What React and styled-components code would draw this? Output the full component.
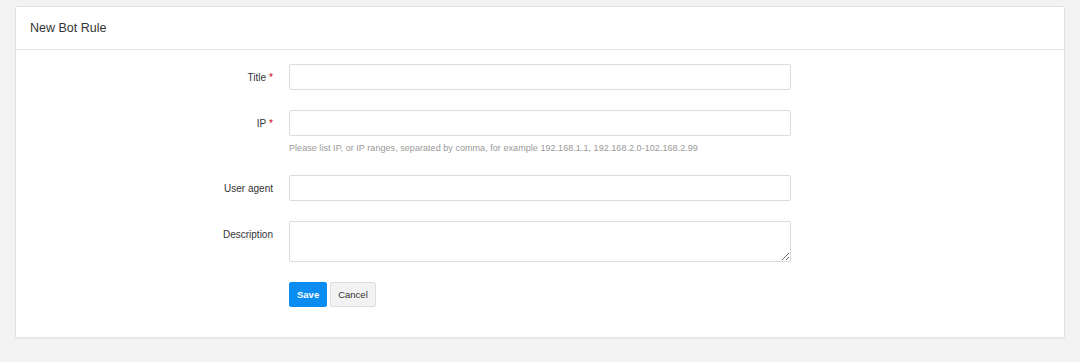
import { createGlobalStyle, styled } from "styled-components";

const GlobalStyle = createGlobalStyle`
  html, body {
    margin: 0;
    padding: 0;
    background-color: #f3f3f3;
    font-family: "Liberation Sans", Arial, sans-serif;
    color: #333;
  }
`;

const Page = styled.div`
  padding: 6px 15px 0 15px;
  height: 362px;
  box-sizing: border-box;
`;

const Card = styled.div`
  background-color: #ffffff;
  border: 1px solid #e2e2e2;
  border-radius: 2px;
  box-shadow: 0 1px 1px rgba(0, 0, 0, 0.04);
`;

const CardHeader = styled.div`
  height: 42px;
  display: flex;
  align-items: center;
  padding: 0 14px;
  border-bottom: 1px solid #e6e6e6;

  h2 {
    margin: 0;
    font-size: 12.5px;
    font-weight: 400;
    color: #333;
  }
`;

const CardBody = styled.form`
  padding: 14px 0 30px;
  display: flex;
  flex-direction: column;
  gap: 20px;
`;

const Row = styled.div`
  display: grid;
  grid-template-columns: 257px 502px;
  column-gap: 16px;
  align-items: start;
`;

const Label = styled.label`
  text-align: right;
  font-size: 10px;
  height: 26px;
  line-height: 28px;
  color: #333;

  span {
    color: #d0021b;
    margin-left: 3px;
  }
`;

const Field = styled.div`
  display: flex;
  flex-direction: column;
`;

const Input = styled.input`
  height: 26px;
  box-sizing: border-box;
  border: 1px solid #dcdcdc;
  border-radius: 2px;
  padding: 0 8px;
  font-size: 10px;
  font-family: inherit;
  outline: none;
`;

const TextArea = styled.textarea`
  height: 41px;
  box-sizing: border-box;
  border: 1px solid #dcdcdc;
  border-radius: 2px;
  padding: 5px 8px;
  font-size: 10px;
  font-family: inherit;
  outline: none;
  resize: vertical;
  display: block;
`;

const Help = styled.p`
  margin: 5px 0 0;
  font-size: 9px;
  letter-spacing: 0.05px;
  line-height: 14px;
  color: #999;
`;

const Actions = styled.div`
  display: flex;
  gap: 3px;
`;

const Button = styled.button`
  height: 25px;
  padding: 0 7px;
  font-size: 9.5px;
  font-family: inherit;
  border-radius: 2px;
  cursor: pointer;
  border: 1px solid ${(p) => (p.$primary ? "#0a8cf0" : "#dddddd")};
  background-color: ${(p) => (p.$primary ? "#0a8cf0" : "#f2f2f2")};
  color: ${(p) => (p.$primary ? "#ffffff" : "#333333")};
  font-weight: ${(p) => (p.$primary ? 700 : 400)};
`;

export default function App() {
  return (
    <>
      <GlobalStyle />
      <Page>
        <Card>
          <CardHeader>
            <h2>New Bot Rule</h2>
          </CardHeader>
          <CardBody onSubmit={(e) => e.preventDefault()}>
            <Row>
              <Label htmlFor="title">
                Title<span>*</span>
              </Label>
              <Input id="title" type="text" />
            </Row>
            <Row>
              <Label htmlFor="ip">
                IP<span>*</span>
              </Label>
              <Field>
                <Input id="ip" type="text" />
                <Help>
                  Please list IP, or IP ranges, separated by comma, for example
                  192.168.1.1, 192.168.2.0-102.168.2.99
                </Help>
              </Field>
            </Row>
            <Row>
              <Label htmlFor="ua">User agent</Label>
              <Input id="ua" type="text" />
            </Row>
            <Row>
              <Label htmlFor="desc">Description</Label>
              <TextArea id="desc" />
            </Row>
            <Row>
              <div />
              <Actions>
                <Button type="submit" $primary>
                  Save
                </Button>
                <Button type="button">Cancel</Button>
              </Actions>
            </Row>
          </CardBody>
        </Card>
      </Page>
    </>
  );
}
